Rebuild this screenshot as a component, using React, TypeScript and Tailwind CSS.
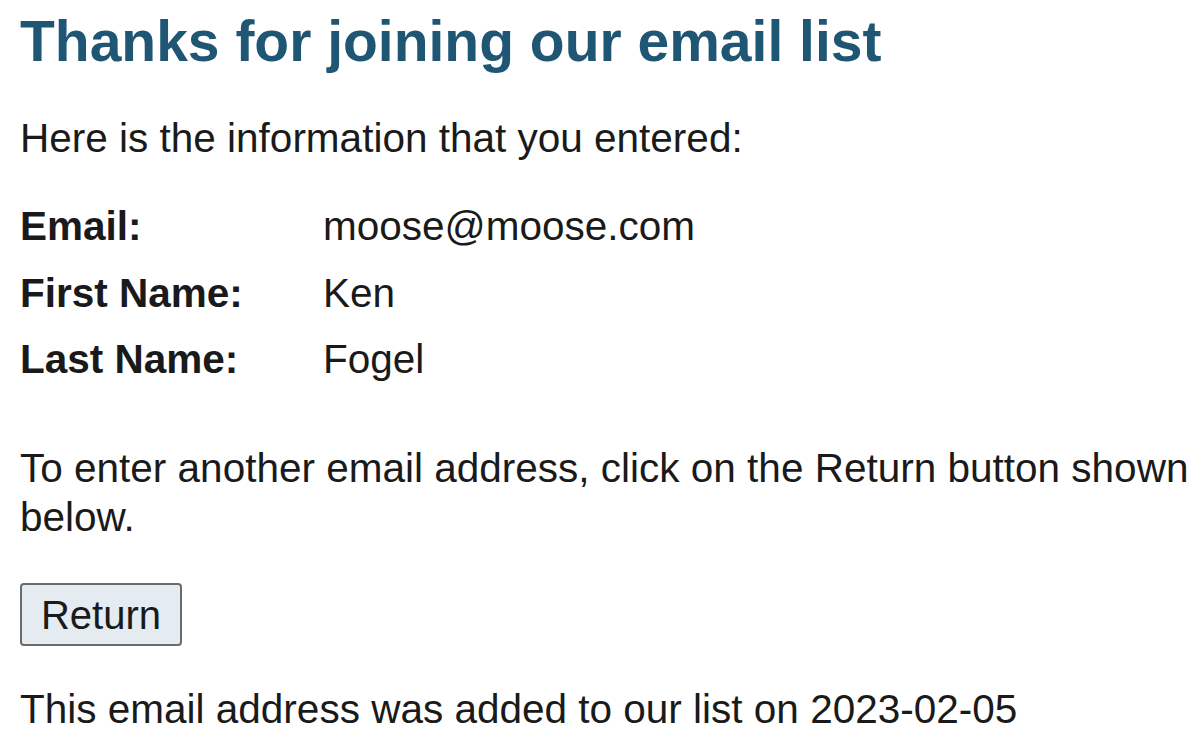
export default function App() {
    const rows = [
        { label: 'Email:', value: 'moose@moose.com' },
        { label: 'First Name:', value: 'Ken' },
        { label: 'Last Name:', value: 'Fogel' },
    ]

    return (
        <div className="min-h-screen bg-white pl-[20px] text-[40.5px] leading-[1.2] text-[#1a1a1a] font-['Liberation_Sans',Arial,sans-serif]">
            <h1 className="pt-[10px] text-[57px] font-bold leading-[1.1] text-[#1e5673]">Thanks for joining our email list</h1>
            <p className="mt-[41px]">Here is the information that you entered:</p>

            <div className="mt-[40px] flex flex-col gap-[18px]">
                {rows.map((row) => (
                    <div key={row.label} className="flex flex-row">
                        <span className="w-[303px] font-bold">{row.label}</span>
                        <span>{row.value}</span>
                    </div>
                ))}
            </div>

            <p className="mt-[60px] pr-[10px]">To enter another email address, click on the Return button shown below.</p>

            <button className="mt-[42px] h-[63px] w-[162px] rounded-[4px] border-2 border-[#6b6b6b] bg-[#e4ebf1] text-[40px] text-[#1a1a1a]">
                Return
            </button>

            <p className="mt-[39px]">This email address was added to our list on 2023-02-05</p>
        </div>
    )
}
